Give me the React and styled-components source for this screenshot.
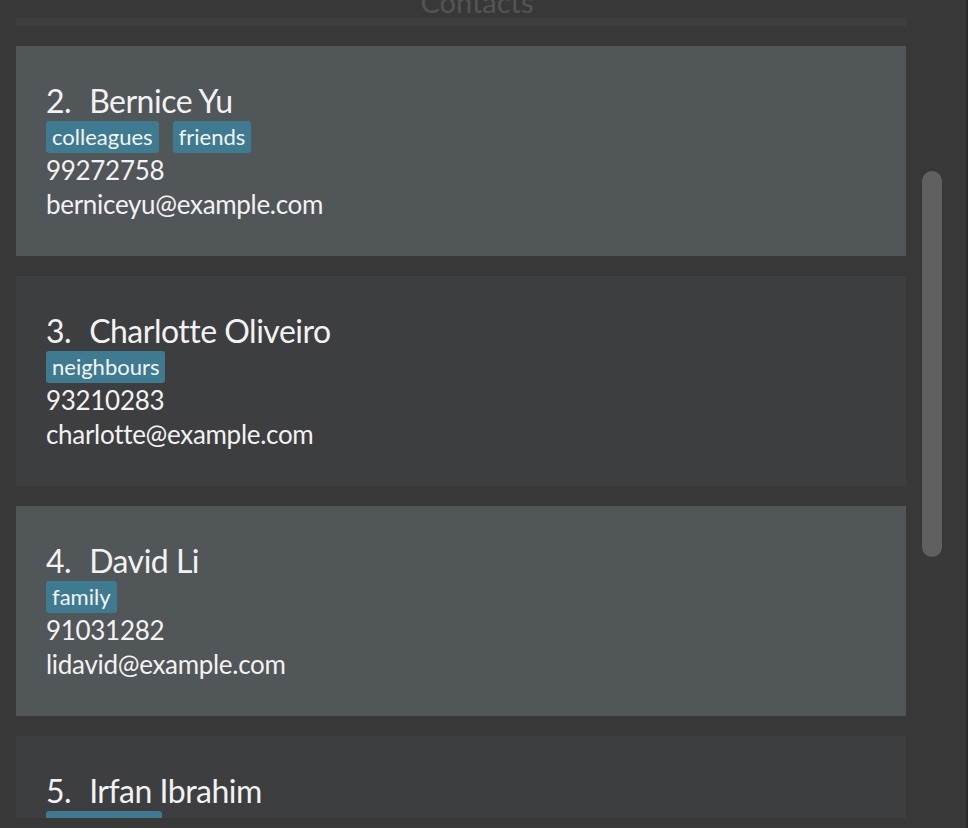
import React from "react";
import styled, { createGlobalStyle } from "styled-components";

const GlobalStyle = createGlobalStyle`
  html, body {
    margin: 0;
    padding: 0;
    background: #383838;
  }
  * {
    box-sizing: border-box;
  }
`;

const persons = [
  { id: 1, name: "Alex Yeoh", tags: ["friends"], phone: "87438807", email: "alexyeoh@example.com" },
  { id: 2, name: "Bernice Yu", tags: ["colleagues", "friends"], phone: "99272758", email: "berniceyu@example.com" },
  { id: 3, name: "Charlotte Oliveiro", tags: ["neighbours"], phone: "93210283", email: "charlotte@example.com" },
  { id: 4, name: "David Li", tags: ["family"], phone: "91031282", email: "lidavid@example.com" },
  { id: 5, name: "Irfan Ibrahim", tags: ["classmates"], phone: "92492021", email: "irfan@example.com" },
];

const Window = styled.div`
  width: 968px;
  height: 828px;
  display: flex;
  flex-direction: column;
  background: #383838;
  border-right: 2px solid #2b2b2b;
  font-family: Lato, Roboto, "Liberation Sans", sans-serif;
  overflow: hidden;
`;

const Header = styled.div`
  height: 18px;
  flex-shrink: 0;
  overflow: hidden;
  display: flex;
  justify-content: center;
  padding-right: 12px;
`;

const HeaderTitle = styled.div`
  margin-top: -15px;
  font-size: 29px;
  line-height: 34px;
  color: #545454;
`;

const Body = styled.div`
  flex: 1;
  display: flex;
  min-height: 0;
  margin-bottom: 10px;
`;

const Viewport = styled.div`
  width: 906px;
  overflow: hidden;
`;

const CardList = styled.div`
  display: flex;
  flex-direction: column;
  gap: 20px;
  padding-left: 16px;
  margin-top: -202px;
`;

const Card = styled.div`
  height: 210px;
  flex-shrink: 0;
  padding: 37px 30px 0;
  background: ${(p) => (p.$even ? "#515658" : "#3c3e40")};
  color: #f2f2f2;
`;

const NameRow = styled.div`
  display: flex;
  font-size: 32px;
  line-height: 36px;
  letter-spacing: -0.5px;
  margin-bottom: 2px;
  white-space: nowrap;
`;

const Index = styled.span`
  margin-right: 18px;
`;

const Tags = styled.div`
  display: flex;
  gap: 14px;
`;

const Tag = styled.span`
  background: #3e7b91;
  color: #f4f4f4;
  font-size: 22px;
  line-height: 26px;
  padding: 3px 6px;
  border-radius: 3px;
`;

const SmallLabel = styled.div`
  font-size: 26px;
  line-height: 34px;
  letter-spacing: -0.3px;
`;

const Track = styled.div`
  flex: 1;
  padding: 153px 0 0 16px;
`;

const Thumb = styled.div`
  width: 20px;
  height: 386px;
  border-radius: 10px;
  background: #606060;
`;

const PersonCard = ({ person }) => (
  <Card $even={person.id % 2 === 0}>
    <NameRow>
      <Index>{person.id}.</Index>
      {person.name}
    </NameRow>
    <Tags>
      {person.tags.map((t) => (
        <Tag key={t}>{t}</Tag>
      ))}
    </Tags>
    <SmallLabel>{person.phone}</SmallLabel>
    <SmallLabel>{person.email}</SmallLabel>
  </Card>
);

export default function App() {
  return (
    <>
      <GlobalStyle />
      <Window>
        <Header>
          <HeaderTitle>Contacts</HeaderTitle>
        </Header>
        <Body>
          <Viewport>
            <CardList>
              {persons.map((p) => (
                <PersonCard key={p.id} person={p} />
              ))}
            </CardList>
          </Viewport>
          <Track>
            <Thumb />
          </Track>
        </Body>
      </Window>
    </>
  );
}
